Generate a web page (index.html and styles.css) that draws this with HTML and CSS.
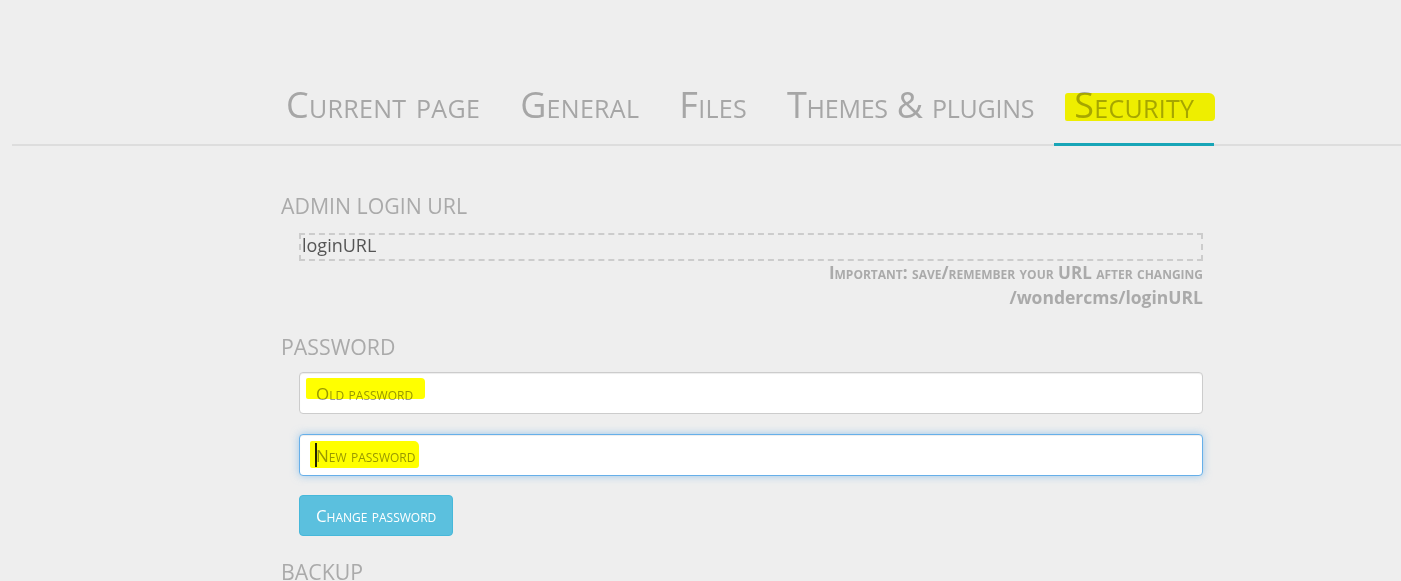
FILE: index.html
```html
<!DOCTYPE html>
<html>
<head>
<meta charset="utf-8">
<title>Settings</title>
<link rel="stylesheet" href="styles.css">
</head>
<body>
<div class="panel">
  <ul class="tabs">
    <li><a class="tab">Current page</a></li>
    <li><a class="tab">General</a></li>
    <li><a class="tab">Files</a></li>
    <li><a class="tab tab-tight">Themes &amp; plugins</a></li>
    <li><a class="tab active">Security<span class="mark mark-tab"></span></a></li>
  </ul>
  <div class="content">
    <h4 class="heading">ADMIN LOGIN URL</h4>
    <div class="field-wrap">
      <div class="editable">loginURL</div>
      <div class="note">Important: save/remember your URL after changing</div>
      <div class="note-url">/wondercms/loginURL</div>
    </div>
    <h4 class="heading heading-pw">PASSWORD</h4>
    <div class="field-wrap">
      <div class="input-box">
        <input class="input" type="password" placeholder="Old password">
        <span class="mark mark-old"></span>
      </div>
      <div class="input-box input-box-new">
        <input class="input input-focus" type="password" placeholder="New password">
        <span class="caret"></span>
        <span class="mark mark-new"></span>
      </div>
      <button class="btn">Change password</button>
    </div>
    <h4 class="heading heading-backup">BACKUP</h4>
  </div>
</div>
</body>
</html>
```
FILE: styles.css
```css
html, body {
  margin: 0;
  padding: 0;
}
body {
  background: #eeeeee;
  font-family: "Open Sans", "Noto Sans", sans-serif;
  height: 581px;
  overflow: hidden;
}
.panel {
  margin-left: 12px;
}
.tabs {
  list-style: none;
  margin: 0;
  padding: 84px 0 0 254px;
  display: flex;
  border-bottom: 2px solid #dddddd;
}
.tab {
  position: relative;
  display: block;
  padding: 0 20px 17px;
  font-size: 36px;
  letter-spacing: 0.3px;
  line-height: 42px;
  font-variant: small-caps;
  color: #a6a6a6;
  border-bottom: 3px solid transparent;
  margin-bottom: -2px;
  white-space: nowrap;
}
.tab-tight {
  letter-spacing: -0.25px;
}
.tab.active {
  border-bottom-color: #18a5b7;
}
.mark {
  position: absolute;
  background: #ffff00;
  mix-blend-mode: multiply;
  pointer-events: none;
}
.mark-tab {
  left: 11px;
  top: 9px;
  width: 150px;
  height: 28px;
  border-radius: 3px 6px 4px 2px;
}
.content {
  margin-left: 269px;
  width: 922px;
}
.heading {
  margin: 48px 0 0;
  font-size: 21.3px;
  line-height: 24px;
  font-weight: normal;
  color: #aaaaaa;
}
.heading-pw {
  margin-top: 26px;
}
.heading-backup {
  margin-top: 24px;
}
.field-wrap {
  padding-left: 18px;
}
.editable {
  margin-top: 15px;
  border: 2px dashed #cccccc;
  padding: 0 1px 4px;
  font-size: 18px;
  line-height: 20px;
  color: #555555;
}
.note {
  margin-top: 2px;
  text-align: right;
  font-size: 17px;
  line-height: 20px;
  font-weight: bold;
  font-variant: small-caps;
  color: #aaaaaa;
}
.note-url {
  margin-top: 2px;
  text-align: right;
  font-size: 17.5px;
  line-height: 24px;
  font-weight: bold;
  color: #aaaaaa;
}
.input-box {
  position: relative;
  margin-top: 13px;
}
.input-box-new {
  margin-top: 20px;
}
.input {
  display: block;
  box-sizing: border-box;
  width: 100%;
  height: 42px;
  margin: 0;
  padding: 0 16px;
  border: 1px solid #cccccc;
  border-radius: 4px;
  background: #ffffff;
  font-family: "Open Sans", "Noto Sans", sans-serif;
  font-size: 17px;
  font-variant: small-caps;
  color: #555555;
  outline: none;
  box-shadow: inset 0 1px 1px rgba(0, 0, 0, 0.075);
}
.input::placeholder {
  color: #999999;
  font-variant: small-caps;
}
.input-focus {
  border-color: #66afe9;
  box-shadow: inset 0 1px 1px rgba(0, 0, 0, 0.075), 0 0 8px rgba(102, 175, 233, 0.6);
}
.mark-old {
  left: 7px;
  top: 6px;
  width: 119px;
  height: 21px;
  border-radius: 2px 4px 3px 2px;
}
.mark-new {
  left: 11px;
  top: 7px;
  width: 109px;
  height: 27px;
  border-radius: 2px 5px 3px 2px;
}
.caret {
  position: absolute;
  left: 16px;
  top: 9px;
  width: 2px;
  height: 24px;
  background: #222222;
}
.btn {
  display: block;
  margin-top: 19px;
  height: 41px;
  padding: 0 16px;
  border: 1px solid #46b8da;
  border-radius: 4px;
  background: #5bc0de;
  color: #ffffff;
  font-family: "Open Sans", "Noto Sans", sans-serif;
  font-size: 16.8px;
  font-variant: small-caps;
  cursor: pointer;
}
```
